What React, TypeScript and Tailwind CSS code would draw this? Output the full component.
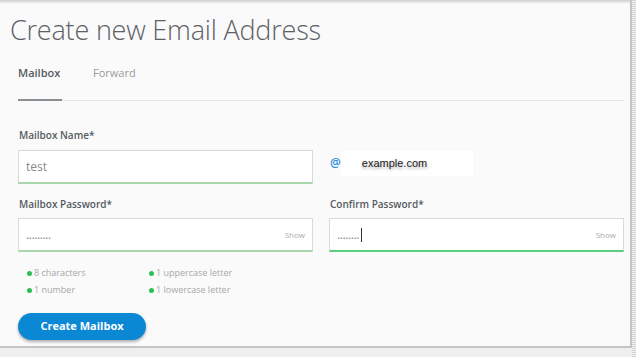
import { useState } from "react";

export default function App() {
  const [tab] = useState("mailbox");

  return (
    <div
      className="w-[636px] h-[357px] bg-[#efefef] overflow-hidden flex"
      style={{ fontFamily: '"Open Sans", "Liberation Sans", sans-serif' }}
    >
      <div className="w-[632px] h-[348px] bg-[#fafafa] border-b-2 border-r-2 border-[#c4c4c4] shadow-[inset_0_4px_3px_-2px_rgba(0,0,0,0.18)] flex flex-col">
        {/* Title */}
        <h1 className="pl-[10px] pt-[13px] text-[27px] leading-[34px] font-light text-[#5d6166] tracking-[-0.2px]">
          Create new Email Address
        </h1>

        {/* Tabs */}
        <div className="mx-[18px] mt-[4px] w-[606px] flex border-b border-[#e6e6e6] h-[50px]">
          <div
            className={
              "w-[44px] text-[11px] leading-[14px] font-semibold pt-[15px] -mb-px border-b-2 " +
              (tab === "mailbox" ? "text-[#555a5f] border-[#8a8f94]" : "")
            }
          >
            Mailbox
          </div>
          <div className="ml-[31px] text-[11px] leading-[14px] text-[#9a9a9a] pt-[15px]">
            Forward
          </div>
        </div>

        {/* Form */}
        <div className="px-[18px] pt-[27px] grid grid-cols-[295px_295px] gap-x-[16px]">
          <div>
            <div className="pl-[1px] text-[10px] leading-[14px] font-semibold text-[#555a5f]">
              Mailbox Name*
            </div>
            <div className="mt-[8px] h-[34px] bg-white border border-[#d9d9d9] border-b-2 border-b-[#a8d8ab] flex items-center px-[7px]">
              <span className="text-[12px] text-[#8a8a8a]">test</span>
            </div>
          </div>
          <div className="pt-[22px]">
            <div className="flex items-center h-[26px]">
              <span className="text-[12px] font-semibold text-[#2d8fdc] pl-[1px]">@</span>
              <div className="w-[132px] h-[25px] bg-white flex items-center pl-[21px]">
                <span
                  className="text-[11px] text-[#222]"
                  style={{ fontFamily: '"Liberation Sans", Arial, sans-serif', textShadow: "0 2px 3px rgba(0,0,0,0.35)" }}
                >
                  example.com
                </span>
              </div>
            </div>
          </div>

          <div className="mt-[13px]">
            <div className="pl-[1px] text-[10px] leading-[14px] font-semibold text-[#555a5f]">
              Mailbox Password*
            </div>
            <div className="mt-[7px] h-[34px] bg-white border border-[#d9d9d9] border-b-2 border-b-[#a8d8ab] flex items-center justify-between px-[7px]">
              <span className="text-[12px] text-[#888] tracking-[-0.4px]">.........</span>
              <span className="text-[8px] text-[#aaa]">Show</span>
            </div>
          </div>
          <div className="mt-[13px]">
            <div className="pl-[1px] text-[10px] leading-[14px] font-semibold text-[#555a5f]">
              Confirm Password*
            </div>
            <div className="mt-[7px] h-[34px] bg-white border border-[#d9d9d9] border-b-2 border-b-[#5ccf7e] flex items-center justify-between px-[7px]">
              <span className="flex items-center">
                <span className="text-[12px] text-[#888] tracking-[-0.4px]">........</span>
                <span className="ml-[2px] w-px h-[14px] bg-[#333]" />
              </span>
              <span className="text-[8px] text-[#aaa]">Show</span>
            </div>
          </div>
        </div>

        {/* Requirements */}
        <div className="pl-[27px] pt-[14px] grid grid-cols-[122px_150px] gap-y-[3px]">
          {["8 characters", "1 uppercase letter", "1 number", "1 lowercase letter"].map((r) => (
            <div key={r} className="flex items-center text-[9px] leading-[14px] text-[#a8a8a8]">
              <span className="w-[5px] h-[5px] rounded-full bg-[#2dbf55] mr-[2px]" />
              {r}
            </div>
          ))}
        </div>

        {/* Button */}
        <div className="pl-[18px] pt-[15px]">
          <button className="w-[128px] h-[27px] rounded-full bg-[#0b88d4] text-white text-[11px] font-bold shadow-[0_2px_3px_rgba(0,0,0,0.3)]">
            Create Mailbox
          </button>
        </div>
      </div>
      <div className="w-[4px] h-full bg-[repeating-linear-gradient(180deg,#d0d0d0_0px,#d0d0d0_1px,#f3f3f3_1px,#f3f3f3_2px)]" />
    </div>
  );
}
